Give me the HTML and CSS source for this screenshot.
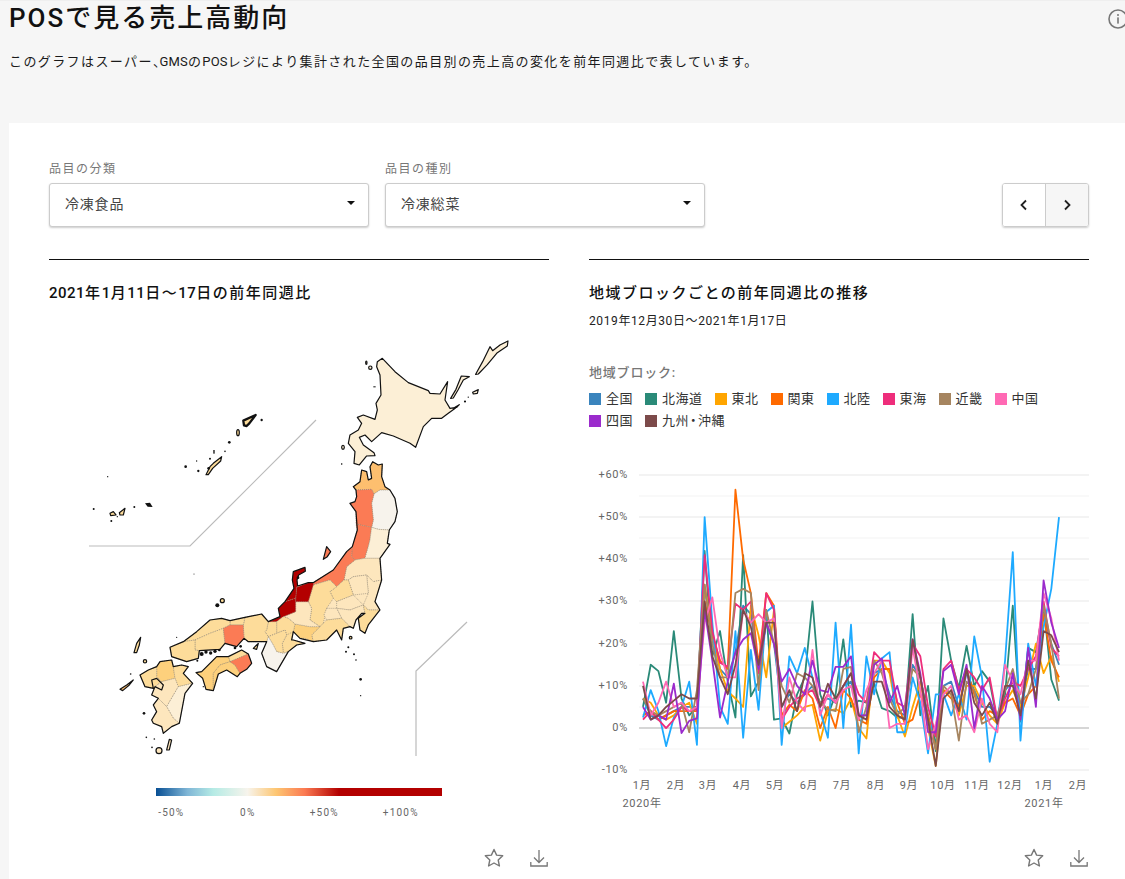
FILE: index.html
```html
<!DOCTYPE html>
<html lang="ja">
<head>
<meta charset="utf-8">
<title>POSで見る売上高動向</title>
<link rel="stylesheet" href="styles.css">
</head>
<body>
<div class="page">
  <header class="head">
    <h1 class="title">POSで見る売上高動向</h1>
    <p class="lead">このグラフはスーパー<span class="halt">、</span><span class="lat">GMS</span>の<span class="lat">POS</span>レジにより集計された全国の品目別の売上高の変化を前年同週比で表しています。</p>
    <svg class="info" width="20" height="20" viewBox="0 0 20 20"><circle cx="10" cy="10" r="9" fill="none" stroke="#777" stroke-width="1.6"/><circle cx="10" cy="6" r="1" fill="#777"/><rect x="9.2" y="8.4" width="1.6" height="6.2" fill="#777"/></svg>
  </header>
  <main class="card">
    <div class="controls">
      <div class="field">
        <div class="field-label">品目の分類</div>
        <div class="select"><span>冷凍食品</span><i class="caret"></i></div>
      </div>
      <div class="field">
        <div class="field-label">品目の種別</div>
        <div class="select"><span>冷凍総菜</span><i class="caret"></i></div>
      </div>
      <div class="pager">
        <div class="pager-btn"><svg width="12" height="12" viewBox="0 0 12 12"><path d="M8 1.500 3.500 6 8 10.500" fill="none" stroke="#222" stroke-width="1.800"/></svg></div>
        <div class="pager-btn pager-btn-alt"><svg width="12" height="12" viewBox="0 0 12 12"><path d="M4 1.500 8.500 6 4 10.500" fill="none" stroke="#222" stroke-width="1.800"/></svg></div>
      </div>
    </div>
    <div class="cols">
      <section class="col">
        <h2 class="col-title"><span class="num">2021</span>年<span class="num">1</span>月<span class="num">11</span>日〜<span class="num">17</span>日の前年同週比</h2>
        <svg class="map" width="500" height="450" viewBox="49 320 500 450">
          <defs>
            <polygon id="honshu" points="700,-130 720,-145 725,-180 740,-175 745,-150 755,-155 750,-190 758,-205 775,-195 787,-198 785,-160 795,-130 810,-120 825,-95 832,-55 825,-25 808,0 802,40 810,43 780,85 785,150 765,215 780,240 745,285 735,310 720,300 715,265 735,250 725,250 708,270 700,295 690,290 670,295 665,330 650,300 620,330 580,335 540,325 520,305 515,330 520,330 555,340 530,345 505,365 470,425 440,410 425,370 440,335 415,335 385,335 372,325 350,350 315,340 300,358 238,362 235,385 200,395 155,380 150,352 190,335 230,305 270,270 305,265 330,272 375,262 425,252 445,275 480,260 475,235 495,215 522,175 517,150 520,125 555,112 556,124 536,135 531,150 533,168 565,158 582,157 640,120 680,65 697,50 712,0 708,-55 690,-80 705,-85 710,-100 708,-120"/>
            <polygon id="shikoku" points="228,428 245,425 290,380 325,380 365,360 385,372 395,400 380,418 360,430 352,440 320,420 295,432 280,482 258,478 248,445"/>
            <polygon id="kyushu" points="120,395 155,390 160,410 185,405 205,410 190,430 218,460 195,490 178,580 155,590 130,610 125,590 100,580 95,570 110,545 100,525 115,505 95,495 105,470 125,480 130,465 110,445 95,450 100,475 75,470 60,435 85,420 110,410"/>
          </defs>
          <path class="inset" d="M89 546H190L316 420"/>
          <path class="inset" d="M416 756V671L467 622"/>
          <g transform="translate(300 330) scale(.3333)">
            <polygon class="coast c1" points="232,95 247,85 285,125 325,158 385,182 390,190 420,192 443,155 435,210 450,235 470,232 445,250 425,265 395,265 370,290 347,352 330,340 280,318 245,308 215,335 195,315 178,322 190,345 222,368 225,377 200,378 178,405 162,400 165,365 145,340 150,315 175,300 185,280 172,262 190,255 225,268 232,240 228,220 243,195 240,135 230,110"/>
            <polygon class="coast c1" points="452,205 468,178 484,138 508,140 490,150 474,180 460,204"/>
            <polygon class="coast c1" points="527,133 548,95 570,50 578,62 600,45 624,33 622,48 592,68 562,104 535,132"/>
            <polygon class="coast c1" points="518,187 535,179 532,190 520,192"/>
            <circle class="coast c1" cx="211" cy="113" r="5"/>
            <ellipse class="coast c1" cx="199" cy="98" rx="2" ry="5"/>
            <ellipse class="coast c1" cx="129" cy="352" rx="4" ry="6"/>
            <rect class="dot" x="220" y="169" width="7" height="3"/>
            <rect class="dot" x="123" y="400" width="4" height="4"/>
            <rect class="dot" x="492" y="212" width="6" height="5"/>
            <rect class="dot" x="503" y="200" width="4" height="3"/>
            <polygon class="coast c1" points="465,232 478,224 470,232"/>
          </g>
          <g transform="translate(80 400) scale(.3333)">
            <polygon class="coast isl c3" points="490,62 527,45 508,70 500,78 492,76"/>
            <ellipse class="coast c3" cx="474" cy="98" rx="4" ry="9"/>
            <polygon class="coast c3" points="378,224 390,200 400,190 425,170 422,183 398,205 385,224"/>
            <polygon class="coast c3" points="90,340 100,335 108,345 92,347"/>
            <polygon class="coast c3" points="118,338 135,325 130,345 120,345"/>
            <g class="blk">
              <circle cx="545" cy="60" r="3.500"/><circle cx="448" cy="127" r="4"/><circle cx="435" cy="154" r="2.500"/><rect x="400" y="150" width="4" height="11"/><circle cx="350" cy="183" r="2"/><circle cx="317" cy="200" r="4"/><circle cx="355" cy="213" r="3.500"/><circle cx="83" cy="230" r="2"/><circle cx="41" cy="327" r="3"/><circle cx="94" cy="363" r="3"/><circle cx="163" cy="321" r="3"/><polygon points="195,310 210,308 218,321 203,320"/><circle cx="112" cy="350" r="2"/><circle cx="390" cy="176" r="3"/><circle cx="386" cy="205" r="4"/>
            </g>
          </g>
          <g transform="translate(120 530) scale(.3333)">
            <use href="#honshu" class="c2"/>
            <use href="#shikoku" class="c5"/>
            <use href="#kyushu" class="c2"/>
            <!-- Tohoku -->
            <polygon class="pref c4" points="700,-130 720,-145 725,-180 740,-175 745,-150 755,-155 750,-190 758,-205 775,-195 787,-198 785,-160 795,-130 810,-120 780,-120 762,-108 755,-122 708,-120"/>
            <polygon class="pref c0" points="762,-108 780,-120 810,-120 825,-95 832,-55 825,-25 808,0 775,-2 755,-8 760,-30 755,-80"/>
            <polygon class="pref c6" points="708,-120 755,-122 762,-108 755,-80 760,-30 755,-8 708,-18 708,-55 690,-80 705,-85 710,-100"/>
            <polygon class="pref c6" points="708,-18 755,-8 750,30 745,50 735,85 705,90 695,80 697,50 712,0"/>
            <polygon class="pref c1" points="755,-8 775,-2 808,0 802,40 810,43 780,85 735,85 745,50 750,30"/>
            <polygon class="pref c2" points="672,150 680,110 705,90 735,85 780,85 785,150 760,155 740,135 700,140 685,150"/>
            <polygon class="pref c6" points="580,157 640,120 680,65 697,50 695,80 705,90 680,110 672,150 650,170 630,150 580,165"/>
            <!-- Kanto / Chubu -->
            <polygon class="pref c2" points="740,135 760,155 785,150 765,215 780,240 745,240 730,225 745,190"/>
            <polygon class="pref c2" points="685,150 700,140 740,135 745,190 700,195"/>
            <polygon class="pref c3" points="630,185 650,170 672,150 685,150 700,195 650,215 640,205"/>
            <polygon class="pref c3" points="565,215 580,165 630,150 650,170 630,185 640,205 620,235 610,280 600,290 570,270 575,235"/>
            <polygon class="pref c2" points="650,215 700,195 730,225 690,240 650,235"/>
            <polygon class="pref c2" points="690,240 730,225 735,250 725,250 708,270 700,295 690,290 665,265 650,235"/>
            <polygon class="pref c3" points="730,225 745,240 780,240 745,285 735,310 720,300 715,265 735,250"/>
            <polygon class="pref c2" points="620,235 650,235 665,265 620,270 612,255"/>
            <polygon class="pref c3" points="600,290 620,270 665,265 690,290 670,295 665,330 650,300 620,330 580,335 575,315 595,295"/>
            <polygon class="pref c5" points="525,282 570,290 600,290 595,295 575,315 580,335 555,325 540,325 520,305"/>
            <polygon class="pref c2" points="490,260 527,245 527,215 565,215 575,235 570,270 600,290 570,290 525,282 505,265"/>
            <!-- Hokuriku -->
            <polygon class="pref c8" points="527,205 530,172 565,158 582,157 580,165 565,215 527,215"/>
            <polygon class="pref c8" points="522,175 517,150 520,125 555,112 556,124 536,135 531,150 533,168 530,172 527,205 495,215"/>
            <polygon class="pref c8" points="445,275 480,260 475,235 495,215 527,205 527,245 490,260 470,275 450,282"/>
            <!-- Kinki -->
            <polygon class="pref c3" points="470,275 490,260 505,265 525,282 520,305 515,330 500,315 495,300 470,310"/>
            <polygon class="pref c3" points="520,305 515,330 520,330 555,340 530,345 505,365 490,370 487,340 500,315"/>
            <polygon class="pref c3" points="445,275 470,275 470,310 445,320 435,305 440,300"/>
            <polygon class="pref c3" points="445,320 470,310 495,300 500,315 487,340 490,370 470,365 460,345"/>
            <polygon class="pref c0" points="440,335 445,320 460,345 470,365 490,370 505,365 470,425 440,410 425,370"/>
            <polygon class="pref c3" points="375,262 425,252 445,275 440,300 435,305 445,320 440,335 415,335 385,335 372,325 370,285"/>
            <!-- Chugoku -->
            <polygon class="pref c3" points="330,272 375,262 370,285 330,285"/>
            <polygon class="pref c3" points="190,335 230,305 270,270 305,265 330,272 330,285 310,295 270,310 225,330"/>
            <polygon class="pref c3" points="225,330 270,310 310,295 315,340 300,358 238,362 225,360"/>
            <polygon class="pref c3" points="155,380 150,352 190,335 225,330 225,360 238,362 235,385 200,395"/>
            <polygon class="pref c6" points="310,295 330,285 370,285 372,325 350,350 315,340"/>
            <!-- Shikoku -->
            <polygon class="pref c3" points="325,380 365,360 385,372 330,395"/>
            <polygon class="pref c5" points="228,428 245,425 290,380 325,380 330,395 300,405 280,430 280,482 258,478 248,445"/>
            <polygon class="pref c5" points="280,482 280,430 300,405 330,395 345,405 360,430 352,440 320,420 295,432"/>
            <polygon class="pref c6" points="330,395 385,372 395,400 380,418 360,430 345,405"/>
            <!-- Kyushu -->
            <polygon class="pref c5" points="120,395 155,390 160,410 165,445 125,455 110,440 110,410"/>
            <polygon class="pref c3" points="110,410 110,440 125,455 105,470 100,475 75,470 60,435 85,420"/>
            <polygon class="pref c3" points="160,410 185,405 205,410 190,430 218,460 175,470 165,445"/>
            <polygon class="pref c2" points="125,455 165,445 175,470 140,530 115,505 95,495 105,470"/>
            <polygon class="pref c1" points="175,470 218,460 195,490 178,580 160,565 140,530"/>
            <polygon class="pref c2" points="100,525 115,505 140,530 160,565 178,580 155,590 130,610 125,590 100,580 95,570 110,545"/>
            <!-- Coast outlines -->
            <use href="#honshu" class="coast"/>
            <use href="#shikoku" class="coast"/>
            <use href="#kyushu" class="coast"/>
            <!-- Islands -->
            <polygon class="coast c6" points="610,88 620,50 632,65 622,80"/>
            <polygon class="coast c3" points="400,355 415,340 410,358"/>
            <polygon class="coast c3" points="42,368 50,340 62,322 58,345 50,368"/>
            <polygon class="coast c4" points="0,478 20,465 40,450 28,465 8,482"/>
            <circle class="coast c3" cx="307" cy="212" r="6"/>
            <circle class="coast c3" cx="75" cy="394" r="5"/>
            <circle class="coast c2" cx="117" cy="662" r="9"/>
            <polygon class="coast c2" points="140,660 148,628 155,630 148,660"/>
            <circle class="coast c3" cx="692" cy="323" r="4"/>
            <g class="blk">
              <circle cx="245" cy="372" r="6"/><circle cx="258" cy="366" r="5"/><circle cx="272" cy="369" r="5"/><circle cx="285" cy="364" r="5"/><circle cx="298" cy="360" r="4"/><circle cx="345" cy="354" r="4"/><circle cx="362" cy="349" r="4"/><circle cx="232" cy="392" r="3"/>
              <circle cx="292" cy="226" r="6"/><circle cx="222" cy="132" r="1.500"/><circle cx="170" cy="322" r="2"/>
              <circle cx="534" cy="143" r="4"/>
              <circle cx="685" cy="352" r="3"/><circle cx="678" cy="365" r="3"/><circle cx="702" cy="373" r="3"/><circle cx="708" cy="390" r="2.500"/><circle cx="722" cy="448" r="4"/><circle cx="722" cy="497" r="2"/>
              <circle cx="79" cy="622" r="2.500"/><circle cx="103" cy="627" r="2.500"/><circle cx="96" cy="652" r="2.500"/><circle cx="72" cy="550" r="4"/><circle cx="32" cy="432" r="2.500"/><circle cx="250" cy="470" r="2"/>
            </g>
          </g>
        </svg>
        <div class="scale">
          <div class="scale-bar"></div>
          <div class="scale-labels"><span>-50%</span><span>0%</span><span>+50%</span><span>+100%</span></div>
        </div>
        <div class="actions actions-map">
          <svg width="22" height="22" viewBox="0 0 22 22"><path d="M11 2.500l2.600 5.600 6.100.7-4.500 4.200 1.200 6L11 16l-5.400 3 1.200-6L2.300 8.800l6.100-.7z" fill="none" stroke="#777" stroke-width="1.400" stroke-linejoin="round"/></svg>
          <svg width="20" height="22" viewBox="0 0 20 22"><path d="M10 3v12M5 10.500l5 5 5-5M1.800 15v4h16.400v-4" fill="none" stroke="#777" stroke-width="1.300"/></svg>
        </div>
      </section>
      <section class="col">
        <h2 class="col-title">地域ブロックごとの前年同週比の推移</h2>
        <p class="range">2019年12月30日〜2021年1月17日</p>
        <div class="legend-title">地域ブロック:</div>
        <ul class="legend">
          <li><i class="sw s-all"></i>全国</li>
          <li><i class="sw s-hok"></i>北海道</li>
          <li><i class="sw s-toh"></i>東北</li>
          <li><i class="sw s-kan"></i>関東</li>
          <li><i class="sw s-hkr"></i>北陸</li>
          <li><i class="sw s-tok"></i>東海</li>
          <li><i class="sw s-kin"></i>近畿</li>
          <li><i class="sw s-chu"></i>中国</li>
          <li><i class="sw s-shi"></i>四国</li>
          <li><i class="sw s-kyu"></i>九州<span class="mid">・</span>沖縄</li>
        </ul>
        <svg class="chart" width="500" height="355" viewBox="589 460 500 355">
          <g class="grid-minor"><path d="M639 495H1089M639 537H1089M639 579H1089M639 622H1089M639 664H1089M639 706H1089M639 748H1089"/></g>
          <g class="grid-major"><path d="M639 474H1089M639 516H1089M639 558H1089M639 600H1089M639 643H1089M639 685H1089M639 769H1089"/></g>
          <path class="grid-zero" d="M639 727H1089"/>
          <g class="ylab">
            <text x="628" y="477">+60%</text><text x="628" y="519">+50%</text><text x="628" y="561">+40%</text><text x="628" y="603">+30%</text><text x="628" y="646">+20%</text><text x="628" y="688">+10%</text><text x="628" y="730">0%</text><text x="628" y="772">-10%</text>
          </g>
          <g class="xlab">
            <text x="642" y="788">1月</text><text x="676" y="788">2月</text><text x="708" y="788">3月</text><text x="742" y="788">4月</text><text x="775" y="788">5月</text><text x="809" y="788">6月</text><text x="842" y="788">7月</text><text x="876" y="788">8月</text><text x="909" y="788">9月</text><text x="943" y="788">10月</text><text x="977" y="788">11月</text><text x="1010" y="788">12月</text><text x="1044" y="788">1月</text><text x="1078" y="788">2月</text>
            <text x="642" y="806">2020年</text><text x="1044" y="806">2021年</text>
          </g>
          <svg x="643" y="474" width="416" height="295.200" viewBox="0 -60 54 70" preserveAspectRatio="none" overflow="visible">
            <polyline class="ln l-all" points="0,-7 1,-3 2,-2 3,-3 4,-4 5,-5 6,-5 7,-5 8,-33 9,-22 10,-14 11,-12 12,-18 13,-29 14,-27 15,-14 16,-25 17,-20 18,-5 19,-8 20,-6 21,-8 22,-10 23,-6 24,-7 25,-6 26,-10 27,-11 28,-3 29,-3 30,-13 31,-14 32,-8 33,-4 34,-3 35,-15 36,-12 37,-3 38,4 39,-10 40,-11 41,-5 42,-13 43,-9 44,-5 45,-5 46,-3 47,-9 48,-11 49,-5 50,-14 51,-14 52,-27 53,-20 54,-15"/>
            <polyline class="ln l-hok" points="0,-5 1,-15 2,-13.500 3,-6 4,-23 5,-7 6,-3 7,-5 8,-42 9,-17 10,-23 11,-11 12,-2.500 13,-41 14,-7.500 15,-11 16,-28 17,-2 18,-2.300 19,1.300 20,-8 21,-12 22,-30 23,-8 24,-3 25,-8 26,-21 27,-5 28,-6.500 29,-6 30,-10.500 31,-4.700 32,-4 33,-2.500 34,-2.500 35,-27 36,-3 37,-10 38,5.500 39,-26 40,-16 41,-9.500 42,-19.500 43,-10 44,-13.500 45,-11 46,-1.500 47,-8 48,-29 49,-1.500 50,-19 51,-18 52,-29 53,-11.500 54,-6.500"/>
            <polyline class="ln l-toh" points="0,-7 1,-6 2,-3 3,-2 4,-3 5,-5 6,-6 7,-1 8,-34 9,-22 10,-14 11,-8.700 12,-7 13,-5 14,-29 15,-22 16,-12 17,-28 18,0 19,-1.500 20,-3 21,-5 22,-5.500 23,3 24,-4 25,-4.500 26,-3.500 27,-7 28,0 29,2.500 30,-16 31,-16 32,-13 33,-3 34,2 35,-5 36,-11 37,0 38,9 39,-9 40,-8 41,-3 42,-10 43,-10 44,-6 45,-3 46,-1 47,-6 48,-9 49,-5 50,-12 51,-20 52,-13 53,-17 54,-11"/>
            <polyline class="ln l-kan" points="0,-3 1,-4 2,-2 3,-3 4,-4 5,-4 6,-4 7,-4 8,-30 9,-22 10,-16 11,-14 12,-56.500 13,-40 14,-32 15,-15 16,-32 17,-29 18,-3 19,-5.500 20,-4 21,-9 22,-7 23,0 24,-5 25,0 26,-9 27,-7 28,-2 29,-1 30,-12 31,-14 32,-14 33,-6 34,-1 35,-2 36,-8 37,-3 38,5 39,-9 40,-7 41,-5 42,-14 43,-8 44,-2 45,-4 46,-3 47,-6 48,-7 49,-3 50,-8 51,-10 52,-27 53,-16 54,-12"/>
            <polyline class="ln l-hkr" points="0,-2.500 1,-9 2,-4 3,4.300 4,-2.500 5,-5 6,-11 7,4 8,-50 9,-25 10,-5 11,-1 12,-23 13,2.300 14,-18.500 15,-4.300 16,-27.500 17,-29 18,4 19,-17 20,-13 21,-19 22,-12 23,-4 24,2.300 25,-25 26,0 27,-24.500 28,6 29,-17 30,-8 31,-16.500 32,-18 33,1 34,1 35,-12 36,-6 37,6 38,-8 39,-8 40,-3 41,-8 42,-2 43,-21.700 44,-12 45,8 46,-1 47,-16 48,-41.700 49,3 50,-20 51,-10 52,-24 53,-33 54,-50"/>
            <polyline class="ln l-tok" points="0,-2 1,-4 2,-2 3,0 4,-2 5,-5 6,-4 7,-4.500 8,-41 9,-23 10,-15.500 11,-14.500 12,-29.500 13,-28 14,-30 15,-13 16,-32 17,-28 18,-2 19,-5 20,-7 21,-8 22,-9 23,-5 24,-8 25,-6 26,-10 27,-13 28,-8 29,-6 30,-18 31,-16 32,-16 33,-6 34,-5 35,-20 36,-17 37,-5 38,2 39,-14 40,-16 41,-9 42,-14 43,-12 44,-9 45,-12 46,-2 47,-7 48,-11 49,-10 50,-14 51,-17 52,-30 53,-19 54,-17"/>
            <polyline class="ln l-kin" points="0,-7 1,-4 2,-3 3,-4 4,-5 5,-6 6,1 7,-9 8,-34 9,-20 10,-12 11,-12 12,-32 13,-33 14,-32 15,-9 16,-28 17,-20 18,-10 19,-6 20,-13 21,-12 22,-10 23,-6 24,-4.500 25,-4 26,-14 27,-14.500 28,1 29,-5 30,-16 31,-13 32,-7 33,-3 34,-5 35,-14 36,-12 37,-2 38,5 39,-10 40,-8 41,3 42,-11 43,-9 44,-1 45,-2 46,-3 47,-9 48,-14 49,-6 50,-8 51,-14 52,-29 53,-20 54,-7"/>
            <polyline class="ln l-chu" points="0,-11 1,-3 2,-6 3,-11 4,-5 5,-6 6,-4 7,-5 8,-25 9,-31 10,-18 11,-12 12,-12 13,-28 14,-25 15,-27 16,-25 17,-26 18,0 19,-12 20,-6 21,-4 22,-18.500 23,-3 24,-8 25,-6 26,-9 27,-10 28,-2 29,-9 30,-13 31,-16 32,0 33,-1 34,-1 35,-19 36,-9 37,5 38,-1 39,-8 40,-10 41,-2 42,-3 43,1 44,-7 45,-1 46,1 47,-15 48,-11 49,-8 50,-16 51,-16 52,-32 53,-26 54,-16"/>
            <polyline class="ln l-shi" points="0,-5 1,-2 2,-3 3,-2 4,-10.500 5,1.200 6,-1.700 7,-2.300 8,-28 9,-16 10,-2.500 11,-11 12,-18 13,-21 14,-22.500 15,-14 16,-25 17,-20 18,-11 19,-14 20,-10 21,-8 22,-16 23,-9 24,-8.500 25,-14.500 26,-14.500 27,-17 28,-3 29,-3 30,-15 31,-16.500 32,-6 33,-10 34,-3 35,-21 36,-13 37,1 38,1 39,-13.500 40,-15 41,-8 42,-15 43,0 44,-10 45,-7 46,-2 47,-4 48,-13 49,-2 50,-19 51,-5 52,-35 53,-25 54,-19"/>
            <polyline class="ln l-kyu" points="0,-10 1,-2 2,-3 3,-5 4,-6.500 5,-8 6,-7 7,-7 8,-30 9,-17 10,-12 11,-8 12,-15 13,-28 14,-24 15,-15 16,-25 17,-25 18,-5 19,-9 20,-4 21,-13 22,-12 23,-5 24,-10.500 25,-7 26,-10 27,-13 28,-3 29,-2 30,-11 31,-11 32,-5 33,-3 34,-2 35,-21 36,-12 37,-2 38,9 39,-7 40,-9 41,-4 42,-14 43,-6 44,-3 45,-6 46,-1 47,-10 48,-10 49,-3 50,-16 51,-7 52,-23 53,-22 54,-18"/>
          </svg>
        </svg>
        <div class="actions actions-chart">
          <svg width="22" height="22" viewBox="0 0 22 22"><path d="M11 2.500l2.600 5.600 6.100.7-4.500 4.200 1.200 6L11 16l-5.400 3 1.200-6L2.300 8.800l6.100-.7z" fill="none" stroke="#777" stroke-width="1.400" stroke-linejoin="round"/></svg>
          <svg width="20" height="22" viewBox="0 0 20 22"><path d="M10 3v12M5 10.500l5 5 5-5M1.800 15v4h16.400v-4" fill="none" stroke="#777" stroke-width="1.300"/></svg>
        </div>
      </section>
    </div>
  </main>
</div>
</body>
</html>
```
FILE: styles.css
```css
* { box-sizing: border-box; }
html, body { margin: 0; padding: 0; height: 879px; overflow: hidden; }
body { font-family: Roboto, "Noto Sans CJK JP", sans-serif; color: #111; background: #f6f6f6; }
.page { width: 1125px; height: 879px; overflow: hidden; }
.head { position: relative; height: 123px; padding: 0 0 0 9px; border-top: 1px solid #efefef; }
.title { margin: -1px 0 0; font-size: 26px; font-weight: 500; line-height: 36px; letter-spacing: 2px; }
.lead { margin: 8px 0 0; font-size: 13px; line-height: 36px; height: 36px; letter-spacing: 1.4px; white-space: nowrap; color: #1a1a1a; }
.halt { font-feature-settings: "halt"; letter-spacing: 0; }
.lat { letter-spacing: .2px; }
.info { position: absolute; left: 1108px; top: 8px; }
.card { margin-left: 9px; height: 756px; background: #fff; padding: 36px 36px 0 40px; }
.controls { display: flex; gap: 16px; align-items: flex-end; }
.field { width: 320px; }
.field-label { font-size: 12px; line-height: 18px; height: 24px; padding-top: 1px; letter-spacing: 1.5px; color: #777; }
.select { display: flex; align-items: center; justify-content: space-between; height: 44px; padding: 0 13px 5px 15px; background: #fff; border: 1px solid #ccc; border-radius: 3px; box-shadow: 0 1px 2px rgba(0,0,0,.2); font-size: 14px; letter-spacing: .8px; color: #444; }
.caret { width: 0; height: 0; border-left: 4.5px solid transparent; border-right: 4.5px solid transparent; border-top: 4.5px solid #111; }
.pager { display: flex; margin-left: auto; width: 87px; height: 44px; border: 1px solid #ccc; border-radius: 3px; box-shadow: 0 1px 2px rgba(0,0,0,.2); overflow: hidden; }
.pager-btn { flex: 1; display: flex; align-items: center; justify-content: center; background: #fff; }
.pager-btn-alt { background: #f6f6f6; border-left: 1px solid #ccc; }
.cols { display: grid; grid-template-columns: 500px 500px; gap: 40px; margin-top: 32px; }
.col { border-top: 1px solid #111; height: 620px; }
.col-title { margin: 23px 0 0; font-size: 15px; font-weight: 500; line-height: 20px; letter-spacing: 1.5px; white-space: nowrap; }
.num { letter-spacing: .5px; }
.map { display: block; margin-top: 17px; }
.scale { margin: 18px 0 0 107px; width: 286px; }
.scale-bar { height: 8px; background: linear-gradient(90deg, #084f94 0%, #7fb6d6 11%, #b5ebe5 20%, #f7f4ec 32%, #fdc672 42%, #fb7a52 52%, #b30000 64%, #b30000 100%); }
.scale-labels { display: grid; grid-template-columns: repeat(4, 76.5px); margin: 10px 0 0 -23px; font-size: 10px; line-height: 14px; letter-spacing: 1.2px; color: #666; text-align: center; }
.actions { display: flex; justify-content: flex-end; gap: 24px; align-items: center; }
.actions-map { margin-top: 27px; }
.actions-chart { margin-top: 31px; }
.range { margin: 8px 0 0; font-size: 12px; line-height: 20px; letter-spacing: .6px; color: #222; }
.legend-title { margin-top: 32px; font-size: 13px; line-height: 20px; font-weight: 500; letter-spacing: .8px; color: #777; }
.legend { display: flex; flex-wrap: wrap; list-style: none; margin: 5px 0 0; padding: 0; font-size: 13px; line-height: 22px; letter-spacing: .5px; color: #333; }
.legend li { display: flex; align-items: center; margin-right: 12px; }
.mid { font-feature-settings: "halt"; margin: 0 1px; }
.sw { width: 12px; height: 12px; margin-right: 5px; }
.s-all { background: #3a84bd; } .s-hok { background: #2a8a78; } .s-toh { background: #ffa500; } .s-kan { background: #ff6a00; } .s-hkr { background: #1eaaff; }
.s-tok { background: #ee2d7b; } .s-kin { background: #a68560; } .s-chu { background: #ff69b4; } .s-shi { background: #9b2bcc; } .s-kyu { background: #7c4a4a; }
.chart { display: block; margin-top: 29px; }
.grid-minor path { stroke: #f9f9f9; stroke-width: 2; fill: none; }
.grid-major path { stroke: #f3f3f3; stroke-width: 2; fill: none; }
.grid-zero { stroke: #d6d6d6; stroke-width: 2; fill: none; }
.ylab text { font-size: 11px; text-anchor: end; fill: #666; letter-spacing: .7px; }
.xlab text { font-size: 11px; text-anchor: middle; fill: #666; letter-spacing: .7px; }
.ln { fill: none; stroke-width: 1.8; vector-effect: non-scaling-stroke; stroke-linejoin: round; }
.l-all { stroke: #3a84bd; } .l-hok { stroke: #2a8a78; } .l-toh { stroke: #ffa500; } .l-kan { stroke: #ff6a00; } .l-hkr { stroke: #1eaaff; }
.l-tok { stroke: #ee2d7b; } .l-kin { stroke: #a68560; } .l-chu { stroke: #ff69b4; } .l-shi { stroke: #9b2bcc; } .l-kyu { stroke: #7c4a4a; }
.inset { fill: none; stroke: #bbb; stroke-width: 1.2; }
.coast { fill: none; stroke: #111; stroke-width: 3.6; stroke-linejoin: round; }
.isl { stroke-width: 7; }
.pref { stroke: #8f8777; stroke-width: 2; stroke-dasharray: 3 3; }
.dot, .blk { fill: #111; stroke: none; }
.c0 { fill: #f7f3ec; } .c1 { fill: #fcefd6; } .c2 { fill: #fde6bd; } .c3 { fill: #fddc9a; } .c4 { fill: #fdbf6f; } .c5 { fill: #fdd07c; } .c6 { fill: #fb7b55; } .c8 { fill: #b30000; }
```
